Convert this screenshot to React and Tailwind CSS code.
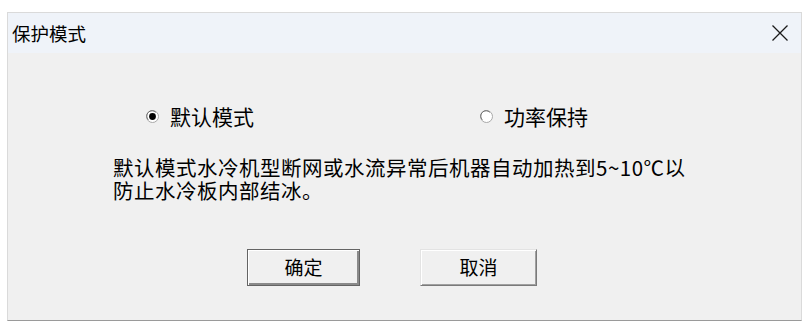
import React, { useState } from 'react';

const cjk = { fontFamily: "'Noto Sans CJK SC', 'Noto Sans', sans-serif" };

function Radio({ checked }) {
  return (
    <svg width="13" height="13" viewBox="0 0 13 13" className="shrink-0">
      <circle cx="6.5" cy="6.5" r="6" fill="#ffffff" stroke="#a8a8a8" strokeWidth="1" />
      <path d="M2.3 9.8 A5 5 0 0 1 9.8 2.3" fill="none" stroke="#707070" strokeWidth="1" />
      {checked && <circle cx="6.5" cy="6.5" r="3.4" fill="#000000" />}
    </svg>
  );
}

export default function App() {
  const [mode, setMode] = useState('default');

  return (
    <div className="w-[806px] h-[322px] bg-white pt-[12px] pl-[7px]" style={cjk}>
      <div className="w-[795px] h-[309px] flex flex-col border border-[#dadada] border-b-[#9a9a9a] bg-[#f0f0f0]">
        <div className="h-[40px] flex items-center justify-between bg-[#eff3f9] pl-[4px] pr-[12px]">
          <span className="text-[18.5px] text-black leading-none">保护模式</span>
          <svg width="18" height="18" viewBox="0 0 18 18">
            <path d="M1.5 1.5 L16.5 16.5 M16.5 1.5 L1.5 16.5" stroke="#1a1a1a" strokeWidth="1.3" fill="none" />
          </svg>
        </div>

        <div className="flex items-center mt-[51px] h-[24px]">
          <button
            className="flex items-center gap-[11px] ml-[138px] w-[334px] text-left"
            onClick={() => setMode('default')}
          >
            <Radio checked={mode === 'default'} />
            <span className="text-[21px] leading-none text-black">默认模式</span>
          </button>
          <button className="flex items-center gap-[11px]" onClick={() => setMode('power')}>
            <Radio checked={mode === 'power'} />
            <span className="text-[21px] leading-none text-black">功率保持</span>
          </button>
        </div>

        <div className="ml-[105px] mt-[28px] w-[600px] flex flex-col text-[20.5px] text-black tracking-[0.5px]">
          <span className="block leading-[23px] h-[23px]">默认模式水冷机型断网或水流异常后机器自动加热到5~10℃以</span>
          <span className="block leading-[23px] h-[23px]">防止水冷板内部结冰。</span>
        </div>

        <div className="flex mt-[47px] ml-[239px] gap-[60px]">
          <button className="w-[113px] h-[37px] bg-[#f0f0f0] border border-[#646464] shadow-[inset_1px_1px_0_#ffffff,inset_-2px_-2px_0_#8a8a8a] text-[19px] text-black flex items-center justify-center">
            确定
          </button>
          <button className="w-[117px] h-[37px] bg-[#f0f0f0] border border-[#e3e3e3] border-r-[#7a7a7a] border-b-[#7a7a7a] shadow-[inset_1px_1px_0_#ffffff,inset_-1px_-1px_0_#a0a0a0] text-[19px] text-black flex items-center justify-center">
            取消
          </button>
        </div>
      </div>
    </div>
  );
}
